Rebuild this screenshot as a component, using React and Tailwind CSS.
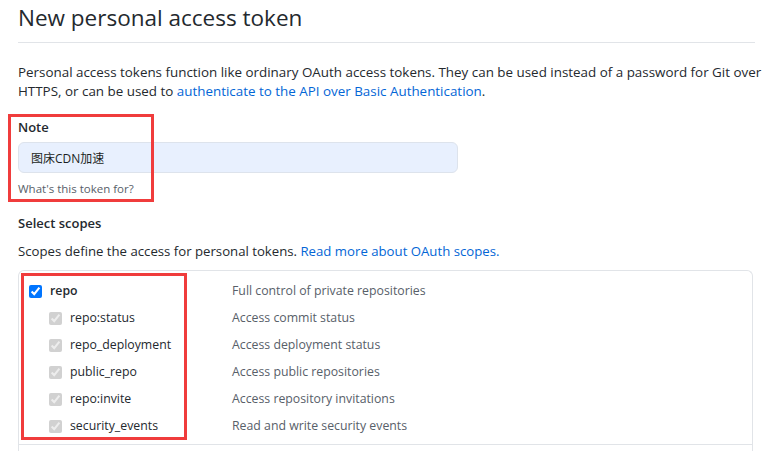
import React from "react"

const font = { fontFamily: '"Segoe UI", "Open Sans", "Noto Sans CJK SC", sans-serif' }

const scopes = [
	{ name: "repo:status", desc: "Access commit status" },
	{ name: "repo_deployment", desc: "Access deployment status" },
	{ name: "public_repo", desc: "Access public repositories" },
	{ name: "repo:invite", desc: "Access repository invitations" },
	{ name: "security_events", desc: "Read and write security events" },
]

function Row({ name, desc, parent }) {
	return (
		<div className="flex items-center h-[27px]">
			<div className={`flex items-center w-[213px] ${parent ? "pl-[10px]" : "pl-[30px]"}`}>
				<input
					type="checkbox"
					defaultChecked
					disabled={!parent}
					className="m-0 w-[13px] h-[13px]"
				/>
				<span className={`ml-[8px] text-[12.3px] text-[#24292e] ${parent ? "font-semibold" : ""}`}>{name}</span>
			</div>
			<span className="text-[12.3px] text-[#586069]">{desc}</span>
		</div>
	)
}

export default function App() {
	return (
		<div className="relative w-[770px] h-[451px] overflow-hidden bg-white pl-[18px] pr-[15px] text-[#24292e]" style={font}>
			{/* header */}
			<div className="h-[43px] border-b border-[#e1e4e8] flex items-start">
				<h1 className="text-[22.5px] leading-[36px] font-normal">New personal access token</h1>
			</div>

			<p className="mt-[20px] text-[13.4px] leading-[19px] whitespace-nowrap">
				Personal access tokens function like ordinary OAuth access tokens. They can be used instead of a password for Git over
				<br />
				HTTPS, or can be used to <a className="text-[#0366d6]">authenticate to the API over Basic Authentication</a>.
			</p>

			<div className="mt-[17px] text-[13px] leading-[19px] font-semibold">Note</div>
			<input
				readOnly
				defaultValue="图床CDN加速"
				className="mt-[5px] block w-[440px] h-[31px] rounded-[6px] border border-[#dde3ec] bg-[#e8f0fe] px-[12px] text-[12px] text-[#1b1f23] outline-none"
				style={font}
			/>
			<div className="mt-[8px] text-[11.5px] leading-[16px] text-[#586069]">What's this token for?</div>

			<div className="mt-[17px] text-[13px] leading-[19px] font-semibold">Select scopes</div>
			<p className="mt-[9px] text-[13.2px] leading-[19px]">
				Scopes define the access for personal tokens. <a className="text-[#0366d6]">Read more about OAuth scopes.</a>
			</p>

			<div className="mt-[9px] w-[735px] border border-[#e1e4e8] border-b-0 rounded-t-[6px] h-[200px]">
				<div className="pt-[7px] pb-[4px] border-b border-[#e1e4e8]">
					<Row name="repo" desc="Full control of private repositories" parent />
					{scopes.map((s) => (
						<Row key={s.name} name={s.name} desc={s.desc} />
					))}
				</div>
			</div>

			{/* annotation boxes */}
			<div className="absolute left-[8px] top-[114px] w-[146px] h-[88px] border-[3px] border-[#f03c3c]" />
			<div className="absolute left-[21px] top-[273px] w-[166px] h-[167px] border-[3px] border-[#f03c3c]" />
		</div>
	)
}
